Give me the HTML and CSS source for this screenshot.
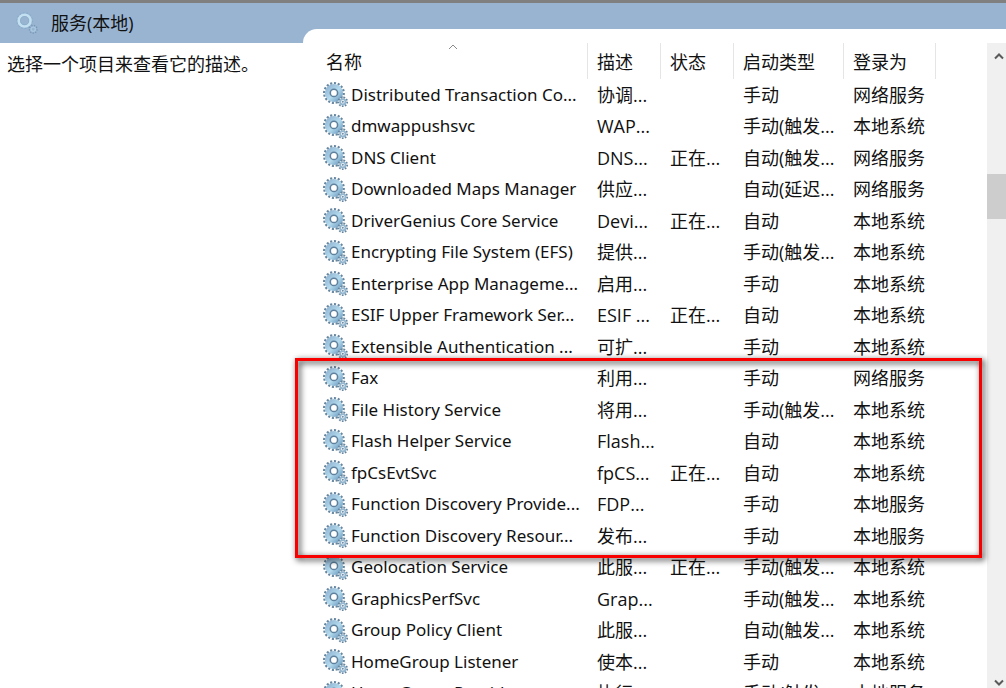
FILE: index.html
```html
<!DOCTYPE html>
<html lang="zh-CN">
<head>
    <meta charset="UTF-8">
    <meta name="viewport" content="width=device-width, initial-scale=1.0">
    <title>服务(本地)</title>
    <link rel="stylesheet" href="styles.css">
</head>

<body>
    <!-- Shared gear icon -->
    <svg class="defs" aria-hidden="true">
        <defs>
            <linearGradient id="steel" x1="0" y1="0" x2="1" y2="1">
                <stop offset="0" stop-color="#94b8d5"/>
                <stop offset="0.55" stop-color="#b4dbee"/>
                <stop offset="1" stop-color="#75a2c5"/>
            </linearGradient>
            <symbol id="gear" viewBox="0 0 24 24">
                <circle cx="10.5" cy="10.5" r="9.4" fill="none" stroke="#67869f" stroke-width="2.2" pathLength="32" stroke-dasharray="1.1 0.9"/>
                <circle cx="10.5" cy="10.5" r="6.2" fill="none" stroke="url(#steel)" stroke-width="5"/>
                <circle cx="10.5" cy="10.5" r="3.5" fill="#fff" stroke="#5f819d" stroke-width="1.5"/>
                <circle cx="19" cy="19" r="4.2" fill="#fff" stroke="#66859d" stroke-width="1.8" pathLength="18" stroke-dasharray="1.1 0.9"/>
                <circle cx="19" cy="19" r="2.6" fill="#fff" stroke="#94b7cf" stroke-width="1.8"/>
                <circle cx="19" cy="19" r="1" fill="#708ea6"/>
            </symbol>
        </defs>
    </svg>

    <main class="window">
        <!-- Description side -->
        <section class="side">
            <header class="title-bar">
                <svg class="title-icon" viewBox="0 0 24 24" aria-hidden="true">
                    <circle cx="9" cy="9" r="8" fill="none" stroke="#86acca" stroke-width="1.4" pathLength="28" stroke-dasharray="1 1"/>
                    <circle cx="9" cy="9" r="6" fill="none" stroke="#c3e0f1" stroke-width="3"/>
                    <circle cx="9" cy="9" r="4.3" fill="none" stroke="#84a9c8" stroke-width="0.8"/>
                    <circle cx="18" cy="18" r="4" fill="none" stroke="#7797b5" stroke-width="1.4" pathLength="18" stroke-dasharray="1 1"/>
                    <circle cx="18" cy="18" r="2.2" fill="none" stroke="#a9c9e0" stroke-width="1.4"/>
                </svg>
                <h1>服务(本地)</h1>
            </header>
            <p class="hint">选择一个项目来查看它的描述。</p>
        </section>

        <!-- Service list -->
        <section class="pane">
            <div class="sheet">
                <div class="list">
                    <table>
                        <colgroup>
                            <col class="col-name">
                            <col class="col-text">
                            <col class="col-text">
                            <col class="col-type">
                            <col class="col-login">
                        </colgroup>
                        <thead>
                            <tr>
                                <th class="name">名称
                                    <svg class="sort" viewBox="0 0 10 6" aria-hidden="true"><path d="M1 5 L5 1 L9 5" fill="none" stroke="#8a8a8a"/></svg>
                                </th>
                                <th>描述</th>
                                <th>状态</th>
                                <th>启动类型</th>
                                <th>登录为</th>
                            </tr>
                        </thead>
                        <tbody id="services"></tbody>
                    </table>
                </div>
                <div class="scrollbar">
                    <button type="button" aria-label="向上滚动"><svg viewBox="0 0 10 8"><path d="M1 6.5 L5 2.5 L9 6.5" fill="none" stroke="#5a5a5a" stroke-width="2"/></svg></button>
                    <div class="track"><div class="thumb"></div></div>
                    <button type="button" class="down" aria-label="向下滚动"><svg viewBox="0 0 10 8"><path d="M1 1.5 L5 5.5 L9 1.5" fill="none" stroke="#5a5a5a" stroke-width="2"/></svg></button>
                </div>
                <div class="highlight"></div>
            </div>
        </section>
    </main>

    <script src="services.js"></script>
</body>
</html>
```
FILE: styles.css
```css
* {
    box-sizing: border-box;
}

body {
    margin: 0;
    background-color: #fff;
    color: #111;
    font-family: "Open Sans", "Noto Sans CJK SC", sans-serif;
    font-size: 18px;
    line-height: 24px;
}

.defs {
    position: absolute;
    width: 0;
    height: 0;
}

.window {
    display: grid;
    grid-template-columns: 303px 1fr;
    height: 100vh;
    overflow: hidden;
    border-top: 3px solid #808080;
}

.title-bar {
    display: flex;
    align-items: center;
    gap: 12px;
    height: 40px;
    padding-left: 16px;
    background-color: #99b4d1;
}

.title-icon {
    width: 23px;
    height: 23px;
}

h1 {
    margin: 0;
    font-size: 18px;
    font-weight: normal;
}

.hint {
    margin: 9px 7px;
}

.pane {
    min-width: 0;
    padding-top: 26px;
    background-color: #99b4d1;
}

.sheet {
    position: relative;
    display: flex;
    justify-content: space-between;
    height: calc(100vh - 29px);
    padding: 14px 0 0 12px;
    background-color: #fff;
    border-top-left-radius: 14px;
}

.list {
    overflow: hidden;
}

table {
    width: 621px;
    table-layout: fixed;
    border-collapse: separate;
    border-spacing: 0;
}

.col-name {
    width: 273px;
}

.col-text {
    width: 73px;
}

.col-type {
    width: 110px;
}

.col-login {
    width: 92px;
}

th {
    height: 36px;
    padding: 2px 0 0 9px;
    border-right: 1px solid #e5e5e5;
    font-weight: normal;
    text-align: left;
}

th.name {
    position: relative;
    padding-left: 11px;
}

.sort {
    position: absolute;
    top: 1px;
    left: 133px;
    width: 10px;
    height: 6px;
}

td {
    height: 31px;
    padding: 0 0 0 9px;
    white-space: nowrap;
}

td:first-child {
    padding-left: 8px;
}

tr:nth-child(even) td {
    height: 32px;
}

.service {
    display: flex;
    align-items: center;
    gap: 3px;
    font-family: "Noto Sans", sans-serif;
    font-size: 17px;
}

.service svg {
    flex: none;
    width: 25px;
    height: 25px;
}

.scrollbar {
    display: flex;
    flex-direction: column;
    width: 19px;
    background-color: #f0f0f0;
}

.scrollbar button {
    height: 26px;
    padding: 0 0 0 4px;
    border: 0;
    background: none;
    line-height: 0;
}

.scrollbar button.down {
    height: 10px;
}

.scrollbar button svg {
    width: 10px;
    height: 8px;
}

.track {
    flex: 1;
    padding-top: 105px;
}

.thumb {
    height: 45px;
    background-color: #cdcdcd;
}

/* marks the services from Fax to Function Discovery */
.highlight {
    position: absolute;
    top: 329px;
    left: -8px;
    right: 24px;
    height: 200px;
    border: 3px solid #f80000;
    filter: drop-shadow(2px 2px 3px rgba(0, 0, 0, 0.9));
    pointer-events: none;
}
```
FILE: services.js
```js
// name, description, status, startup type, log on as
const services = [
    ['Distributed Transaction Co...', '协调...', '', '手动', '网络服务'],
    ['dmwappushsvc', 'WAP...', '', '手动(触发...', '本地系统'],
    ['DNS Client', 'DNS...', '正在...', '自动(触发...', '网络服务'],
    ['Downloaded Maps Manager', '供应...', '', '自动(延迟...', '网络服务'],
    ['DriverGenius Core Service', 'Devi...', '正在...', '自动', '本地系统'],
    ['Encrypting File System (EFS)', '提供...', '', '手动(触发...', '本地系统'],
    ['Enterprise App Manageme...', '启用...', '', '手动', '本地系统'],
    ['ESIF Upper Framework Ser...', 'ESIF ...', '正在...', '自动', '本地系统'],
    ['Extensible Authentication ...', '可扩...', '', '手动', '本地系统'],
    ['Fax', '利用...', '', '手动', '网络服务'],
    ['File History Service', '将用...', '', '手动(触发...', '本地系统'],
    ['Flash Helper Service', 'Flash...', '', '自动', '本地系统'],
    ['fpCsEvtSvc', 'fpCS...', '正在...', '自动', '本地系统'],
    ['Function Discovery Provide...', 'FDP...', '', '手动', '本地服务'],
    ['Function Discovery Resour...', '发布...', '', '手动', '本地服务'],
    ['Geolocation Service', '此服...', '正在...', '手动(触发...', '本地系统'],
    ['GraphicsPerfSvc', 'Grap...', '', '手动(触发...', '本地系统'],
    ['Group Policy Client', '此服...', '', '自动(触发...', '本地系统'],
    ['HomeGroup Listener', '使本...', '', '手动', '本地系统'],
    ['HomeGroup Provider', '执行...', '', '手动(触发...', '本地服务']
];

const body = document.getElementById('services');

services.forEach(([name, ...rest]) => {
    const row = body.insertRow();
    row.insertCell().innerHTML =
        `<div class="service"><svg aria-hidden="true"><use href="#gear"/></svg><span>${name}</span></div>`;

    rest.forEach(text => {
        row.insertCell().textContent = text;
    });
});
```
